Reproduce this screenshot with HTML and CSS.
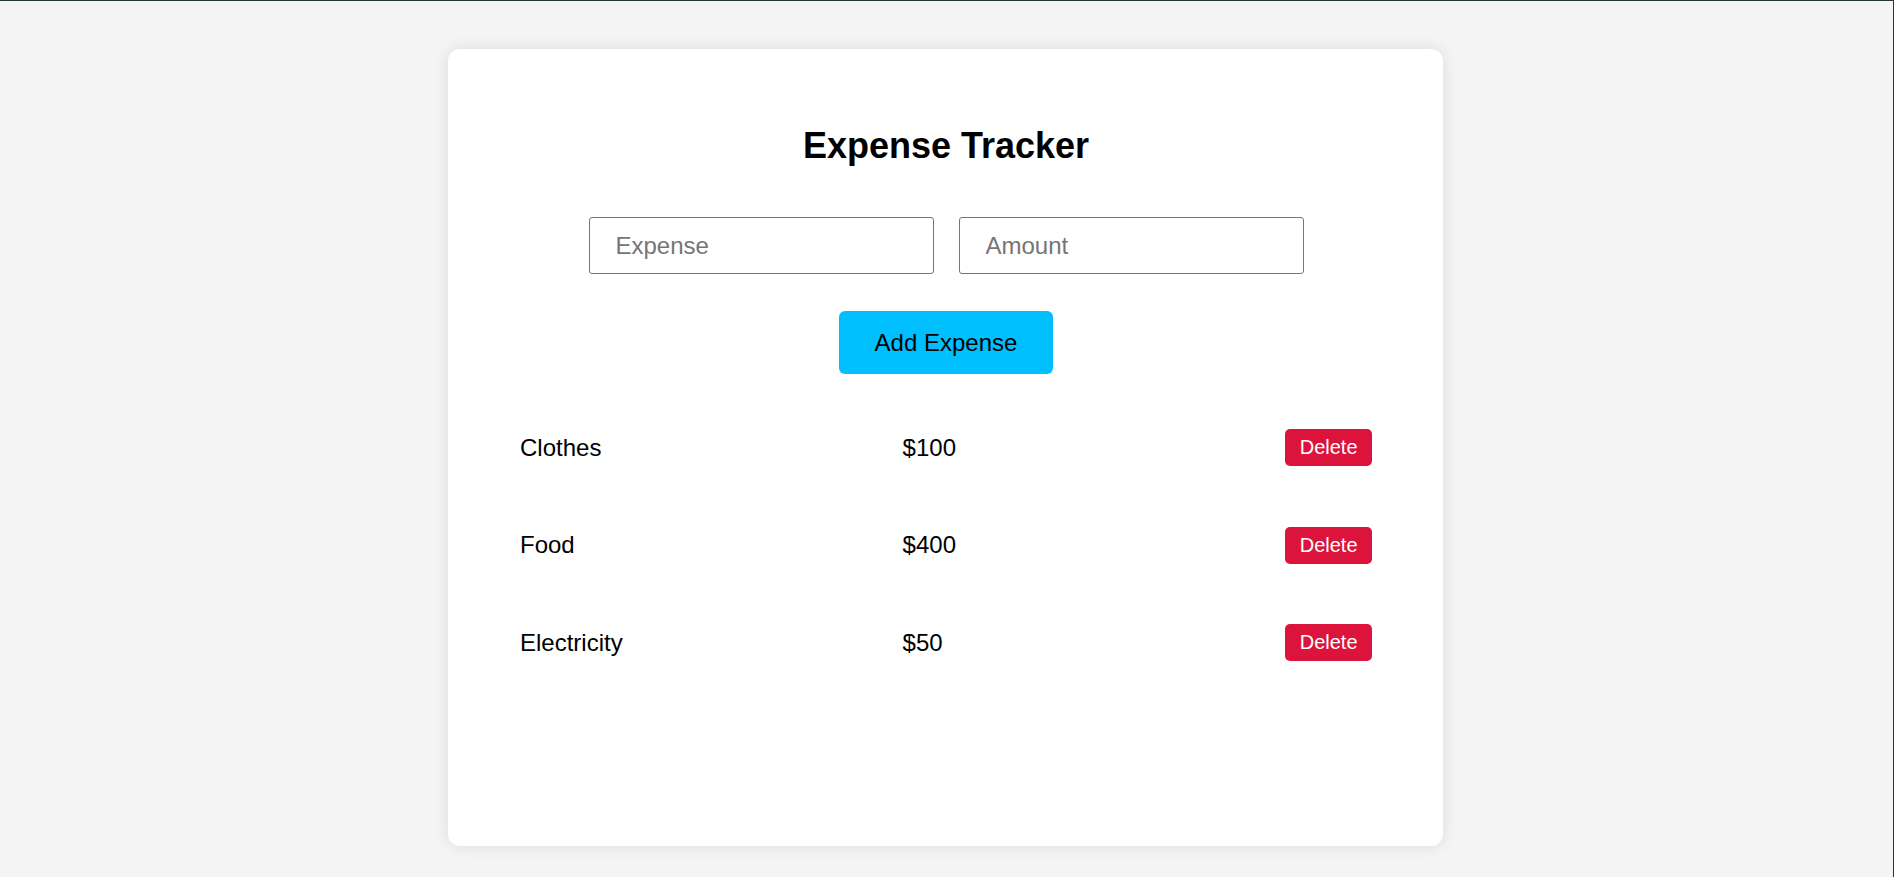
FILE: index.html
```html
<!DOCTYPE html>
<html lang="en">
<head>
<meta charset="UTF-8">
<title>Expense Tracker</title>
<link rel="stylesheet" href="styles.css">
</head>
<body>
<div class="page">
  <div class="card">
    <h1 class="title">Expense Tracker</h1>
    <div class="inputs">
      <input class="field" type="text" placeholder="Expense">
      <input class="field" type="text" placeholder="Amount">
    </div>
    <div class="actions">
      <button class="add-btn">Add Expense</button>
    </div>
    <ul class="list">
      <li class="row"><span class="cell">Clothes</span><span class="cell">$100</span><button class="del-btn">Delete</button></li>
      <li class="row"><span class="cell">Food</span><span class="cell">$400</span><button class="del-btn">Delete</button></li>
      <li class="row"><span class="cell">Electricity</span><span class="cell">$50</span><button class="del-btn">Delete</button></li>
    </ul>
  </div>
</div>
</body>
</html>
```

FILE: styles.css
```css
* { box-sizing: border-box; }
html, body { margin: 0; padding: 0; }
body {
  background: #f4f4f4;
  font-family: "Liberation Sans", Arial, sans-serif;
  color: #000;
}
.page {
  min-height: 877px;
  border-top: 1px solid #1f3a32;
  border-right: 1px solid #1f3a32;
  padding: 48px 2px 0 0;
}
.card {
  width: 995px;
  min-height: 797px;
  margin: 0 auto;
  background: #fff;
  border-radius: 12px;
  box-shadow: 0 0 15px rgba(0, 0, 0, 0.1);
  padding: 77px 71px 40px 72px;
  display: flex;
  flex-direction: column;
}
.title {
  margin: 0;
  font-size: 36px;
  font-weight: bold;
  text-align: center;
  line-height: 40px;
}
.inputs {
  margin-top: 51px;
  display: flex;
  justify-content: center;
  gap: 25px;
}
.field {
  width: 345px;
  height: 57px;
  padding: 0 26px;
  font-family: "Liberation Sans", Arial, sans-serif;
  font-size: 24px;
  border: 1px solid #767676;
  border-radius: 3px;
  color: #000;
  background: #fff;
}
.field::placeholder { color: #757575; }
.actions {
  margin-top: 37px;
  display: flex;
  justify-content: center;
}
.add-btn {
  height: 63px;
  padding: 0 36px;
  font-family: "Liberation Sans", Arial, sans-serif;
  font-size: 24px;
  background: #00bfff;
  color: #000;
  border: none;
  border-radius: 6px;
}
.list {
  list-style: none;
  margin: 55px 0 0;
  padding: 0;
  display: flex;
  flex-direction: column;
  gap: 60.5px;
}
.row {
  display: flex;
  align-items: center;
  height: 37px;
}
.cell {
  flex: 1;
  font-size: 24px;
}
.del-btn {
  height: 37px;
  padding: 0 14.5px;
  font-family: "Liberation Sans", Arial, sans-serif;
  font-size: 20px;
  background: #dc143c;
  color: #fff;
  border: none;
  border-radius: 5px;
}
```
